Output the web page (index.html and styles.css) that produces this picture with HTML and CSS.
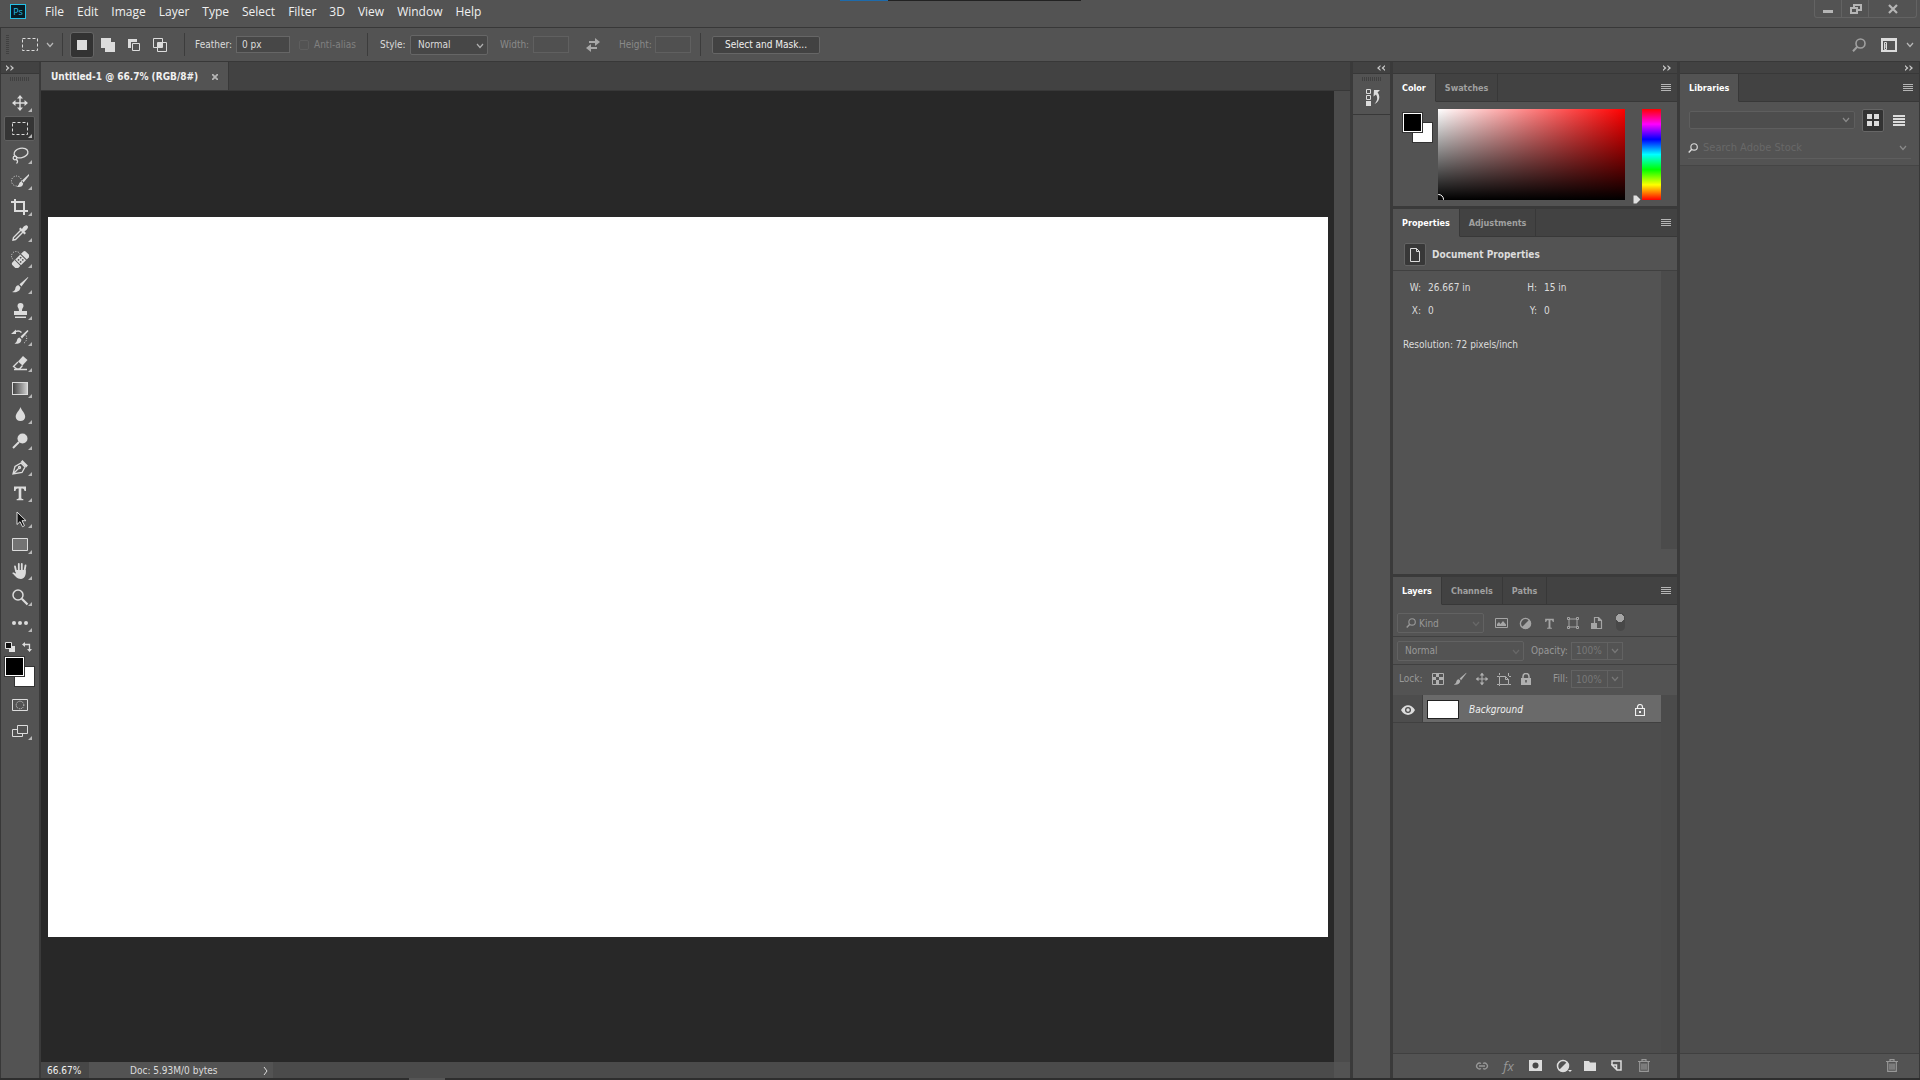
FILE: index.html
```html
<!DOCTYPE html>
<html lang="en">
<head>
<meta charset="UTF-8" />
<meta name="viewport" content="width=device-width, initial-scale=1" />
<title>Untitled-1 @ 66.7% (RGB/8#)</title>
<link rel="stylesheet" href="styles.css">
</head>
<body>

<!-- shared icons -->
<svg class="defs" aria-hidden="true">
  <symbol id="chevron" viewBox="0 0 8 6"><path d="M1 1l3 3.500L7 1" fill="none" stroke="currentColor" stroke-width="1.200"/></symbol>
  <symbol id="collapse" viewBox="0 0 8 6"><path d="M0 0l3.500 3L0 6V4.500L1.500 3 0 1.500zM4.500 0L8 3 4.500 6V4.500L6 3 4.500 1.500z" fill="currentColor"/></symbol>
  <symbol id="panelmenu" viewBox="0 0 10 9"><path d="M0 1.500h10M0 3.500h10M0 5.500h10M0 7.500h10" stroke="currentColor"/></symbol>
  <symbol id="search" viewBox="0 0 14 14"><circle cx="8.500" cy="5.500" r="4.500" fill="none" stroke="currentColor" stroke-width="1.600"/><path d="M5.300 8.800L1 13.300" stroke="currentColor" stroke-width="2"/></symbol>
  <symbol id="brush" viewBox="0 0 18 18"><path d="M17 1L8.500 8.200l1.900 2.300L17.300 1.500zM7.600 9.200c-2.500.1-3 1.700-3.400 3.700-.3 1.300-1.500 2.600-3.200 3.100 3.600.8 8.200-.1 8.400-4.700z" fill="currentColor"/></symbol>
  <symbol id="move" viewBox="0 0 18 18"><path d="M9 2v14M2 9h14" stroke="currentColor" stroke-width="1.400"/><path d="M9 1L6 4.500h6zM9 17l-3-3.500h6zM1 9l3.500-3v6zM17 9l-3.500-3v6z" fill="currentColor"/></symbol>
  <symbol id="type" viewBox="0 0 18 18"><path d="M3 2.500h12V7h-1.500c-.2-1.800-.8-2.600-2-2.600h-1.200v9.300c0 .9.500 1.200 2 1.300v1.200H5.700V15c1.500-.1 2-.4 2-1.300V4.400H6.500c-1.200 0-1.800.8-2 2.600H3z" fill="currentColor"/></symbol>
  <symbol id="trash" viewBox="0 0 12 13"><path d="M0 2.500h12M4 2.500V.7h4v1.800M1.700 3v9.300h8.600V3M4 4.500v6.300M6 4.500v6.300M8 4.500v6.300" fill="none" stroke="currentColor" stroke-width="1.200"/></symbol>
  <symbol id="adjust" viewBox="0 0 14 14"><circle cx="7" cy="7" r="5.500" fill="none" stroke="currentColor" stroke-width="1.500"/><path d="M11 3L3 11A5.500 5.500 0 0 0 11 3z" fill="currentColor"/></symbol>
</svg>

<header class="menubar">
  <span class="ps-logo">Ps</span>
  <nav>
    <button>File</button><button>Edit</button><button>Image</button><button>Layer</button><button>Type</button><button>Select</button><button>Filter</button><button>3D</button><button>View</button><button>Window</button><button>Help</button>
  </nav>
  <div class="window-controls">
    <button aria-label="Minimize"><svg width="10" height="14"><path d="M0 9.500h10" stroke="currentColor" stroke-width="3"/></svg></button>
    <button aria-label="Restore"><svg width="13" height="12" fill="none" stroke="currentColor" stroke-width="2"><path d="M5 5V2h7v5H9"/><path d="M2 5h6v5H2z"/></svg></button>
    <button class="close" aria-label="Close"><svg width="10" height="10"><path d="M1 1l8 8M9 1L1 9" stroke="currentColor" stroke-width="2.200"/></svg></button>
  </div>
  <span class="edge-strip"></span>
</header>

<section class="options">
  <span class="grip-v"></span>
  <button class="tool-preset" aria-label="Tool preset">
    <svg width="16" height="13"><rect x=".5" y=".5" width="15" height="12" fill="none" stroke="currentColor" stroke-dasharray="3 2"/></svg>
    <svg class="chev" width="8" height="6"><use href="#chevron"/></svg>
  </button>
  <span class="sep"></span>
  <div class="modes">
    <button class="on" aria-label="New selection"><svg width="16" height="16"><path d="M3 3h10v10H3z" fill="currentColor"/></svg></button>
    <button aria-label="Add to selection"><svg width="16" height="16"><path d="M1 1h10v4h4v10H5v-4H1z" fill="currentColor"/></svg></button>
    <button aria-label="Subtract from selection"><svg width="16" height="16"><path d="M2 2h9v3H5v6H2z" fill="currentColor"/><path d="M6.500 6.500h7v7h-7z" fill="none" stroke="currentColor"/></svg></button>
    <button aria-label="Intersect with selection"><svg width="16" height="16"><path d="M1.500 1.500h9v9h-9zM5.500 5.500h9v9h-9z" fill="none" stroke="currentColor"/><path d="M6 6h4v4H6z" fill="currentColor"/></svg></button>
  </div>
  <span class="sep"></span>
  <label class="feather" for="feather">Feather:</label>
  <input id="feather" class="field" type="text" value="0 px">
  <label class="anti"><input type="checkbox" disabled>Anti-alias</label>
  <span class="sep"></span>
  <label class="style-label" for="style">Style:</label>
  <span class="select style-select"><select id="style"><option>Normal</option></select><svg width="8" height="6"><use href="#chevron"/></svg></span>
  <label class="dim size-label" for="width">Width:</label>
  <input id="width" class="field small" type="text" disabled>
  <button class="swap" aria-label="Swap width and height"><svg width="14" height="14" fill="currentColor"><path d="M3 3h6V0l5 4-5 4V5H3zM11 9v2H5v3L0 10l5-4v3z"/></svg></button>
  <label class="dim size-label" for="height">Height:</label>
  <input id="height" class="field small" type="text" disabled>
  <span class="sep"></span>
  <button class="mask-btn">Select and Mask...</button>
  <div class="options-right">
    <button class="find" aria-label="Search"><svg width="14" height="14"><use href="#search"/></svg></button>
    <button aria-label="Workspace"><svg width="16" height="14"><path d="M1 1h14v12H1zM1 2h14" fill="none" stroke="currentColor" stroke-width="2"/><path d="M3.500 4.500h2v7h-2zM3.500 7h2M3.500 9h2" fill="none" stroke="currentColor"/></svg>
    <svg class="chev" width="8" height="6"><use href="#chevron"/></svg></button>
  </div>
</section>

<main class="workspace">
  <aside class="toolbar">
    <div class="strip"><svg width="8" height="6"><use href="#collapse"/></svg></div>
    <span class="grip-h"></span>
    <div class="tools">
      <button aria-label="Move"><svg viewBox="0 0 18 18"><use href="#move"/></svg></button>
      <button class="on" aria-label="Rectangular marquee"><svg viewBox="0 0 18 18"><rect x="1.500" y="2.500" width="15" height="12" fill="none" stroke="currentColor" stroke-dasharray="3 2"/></svg></button>
      <button aria-label="Lasso"><svg viewBox="0 0 18 18" fill="none" stroke="currentColor" stroke-width="1.300"><ellipse cx="10" cy="7" rx="7" ry="4.700" transform="rotate(-12 10 7)"/><circle cx="4" cy="12" r="1.800"/><path d="M5 13.500c2 .5 2 2.500.5 4"/></svg></button>
      <button aria-label="Quick selection"><svg viewBox="0 0 18 18"><circle cx="5.500" cy="9" r="5" fill="none" stroke="currentColor" stroke-dasharray="1 1.500"/><path d="M18 2l-7 6.500 1.500 2L18.500 3zM10.500 9.500c-2 .3-2.300 1.800-2.800 3.200-.4 1-1.200 1.700-2.200 2 3.300.7 6.500.2 6.700-3.200z" fill="currentColor"/></svg></button>
      <button aria-label="Crop"><svg viewBox="0 0 18 18" fill="none" stroke="currentColor" stroke-width="2"><path d="M4 1v12h13M0 4h13v13"/></svg></button>
      <button aria-label="Eyedropper"><svg viewBox="0 0 18 18"><path d="M10 6l-7.500 7.500L2 16l2.500-.5L12 8" fill="none" stroke="currentColor" stroke-width="1.400"/><path d="M8 5l1.500-1.500L11 5c1-1.500 3-4.500 5-3.500s1 3.500-2.500 6L15 9l-1.500 1.500z" fill="currentColor"/></svg></button>
      <button aria-label="Healing brush"><svg viewBox="0 0 18 18"><circle cx="5" cy="6" r="4.500" fill="none" stroke="currentColor" stroke-dasharray="1 1.500"/><g transform="rotate(-45 10 9.500)"><rect x="0" y="5.500" width="19" height="8" rx="2" fill="currentColor"/><path d="M5.500 5v9M13.500 5v9" stroke="#535353"/><g fill="#535353"><circle cx="8" cy="8" r=".9"/><circle cx="11" cy="8" r=".9"/><circle cx="8" cy="11" r=".9"/><circle cx="11" cy="11" r=".9"/></g></g></svg></button>
      <button aria-label="Brush"><svg viewBox="0 0 18 18"><use href="#brush"/></svg></button>
      <button aria-label="Clone stamp"><svg viewBox="0 0 18 18" fill="currentColor"><path d="M9.500 1a3 3 0 0 1 3 3c0 1.800-1.500 2-1.500 5h5v4H3V9h5c0-3-1.500-3.200-1.500-5a3 3 0 0 1 3-3zM4 14.500h11V16H4z"/></svg></button>
      <button aria-label="History brush"><svg viewBox="0 0 18 18"><path d="M16.500 2L9.500 8.500l1.500 2L17.500 3zM8.500 9.500c-2 .3-2.200 1.800-2.700 3.500-.3 1.200-1.200 2-2.300 2.500 3.300.6 6.700 0 6.900-4zM0 6l5-4.500V6z" fill="currentColor"/><path d="M3 4.500c3-2 6-1.500 7.500 0" fill="none" stroke="currentColor" stroke-width="1.300"/><path d="M15 7.500c1.500 3 .5 6-2.500 8" fill="none" stroke="currentColor" stroke-dasharray="1 1.500"/></svg></button>
      <button aria-label="Eraser"><svg viewBox="0 0 18 18"><path d="M12 2l4.500 4-5 5.500L7 7.500z" fill="currentColor"/><path d="M7 8l-4.500 4.500L6 15h2.500l3-3.500M3 15.500h13" fill="none" stroke="currentColor" stroke-width="1.300"/></svg></button>
      <button aria-label="Gradient"><span class="gradient-icon"></span></button>
      <button aria-label="Blur"><svg viewBox="0 0 18 18"><path d="M9.500 1c1 3.500 4.700 6 4.700 10a4.800 4.800 0 0 1-9.500 0c0-4 3.800-6.500 4.800-10z" fill="currentColor"/></svg></button>
      <button aria-label="Dodge"><svg viewBox="0 0 18 18"><circle cx="11.500" cy="6.500" r="5" fill="currentColor"/><path d="M8 10l-6 6" stroke="currentColor" stroke-width="2"/></svg></button>
      <button aria-label="Pen"><svg viewBox="0 0 18 18" fill="none" stroke="currentColor" stroke-width="1.300"><path d="M2 16L4 8.500 10 5l4 4-3 5.500zM2 16l5.500-5.500"/><circle cx="8.500" cy="9.500" r="1"/><path d="M10.500 3L16 8.500" stroke-width="2.500"/></svg></button>
      <button aria-label="Type"><svg viewBox="0 0 18 18"><use href="#type"/></svg></button>
      <button aria-label="Path selection"><svg viewBox="0 0 18 18"><path d="M6 2v12.500l3-2.800 2.500 5 2-1-2.500-5h4z" fill="#111" stroke="currentColor"/></svg></button>
      <button aria-label="Rectangle"><svg viewBox="0 0 18 18"><path d="M1.500 2.500h15v12h-15z" fill="#737373" stroke="currentColor"/></svg></button>
      <button aria-label="Hand"><svg viewBox="0 0 18 18"><path d="M5 9L4 4.500M7.800 8V2M10.800 8V2M13.500 9l1-5.500" stroke="currentColor" stroke-width="1.800" stroke-linecap="round"/><path d="M4.200 8h10.500c1 5-1.700 9-4.700 9-4 0-5.500-3-9-6 1.500-1.200 2.500-.2 4 .8z" fill="currentColor"/></svg></button>
      <button aria-label="Zoom"><svg viewBox="0 0 18 18"><circle cx="7" cy="7" r="5" fill="none" stroke="currentColor" stroke-width="1.500"/><path d="M10.800 10.800L16.500 16.500" stroke="currentColor" stroke-width="2.200"/></svg></button>
      <button aria-label="More tools"><svg viewBox="0 0 18 18" fill="currentColor"><circle cx="3" cy="9" r="2"/><circle cx="9" cy="9" r="2"/><circle cx="15" cy="9" r="2"/></svg></button>
    </div>
    <div class="swatch-tools">
      <button aria-label="Default colors"><svg width="10" height="10"><path d="M4 4h6v6H4z" fill="#e0e0e0"/><path d="M.5.500h6v6h-6z" fill="#111" stroke="#e0e0e0"/></svg></button>
      <button aria-label="Switch colors"><svg width="10" height="10"><path d="M2 2.500h5.500V8" fill="none" stroke="currentColor" stroke-width="1.300"/><path d="M0 2.500L3 0v5zM7.500 10L5 7h5z" fill="currentColor"/></svg></button>
    </div>
    <div class="swatches"><span class="bg"></span><span class="fg"></span></div>
    <div class="screen-tools">
      <button class="plain" aria-label="Quick mask"><svg width="18" height="14"><path d="M1.500 1.500h15v11h-15z" fill="none" stroke="currentColor"/><circle cx="9" cy="7" r="3.800" fill="none" stroke="currentColor" stroke-dasharray="1 1"/></svg></button>
      <button aria-label="Screen mode"><svg width="18" height="14"><path d="M1.500 5.500h10v7h-10z" fill="none" stroke="currentColor"/><path d="M6.500 1.500h10v8h-10z" fill="#535353" stroke="currentColor"/></svg></button>
    </div>
  </aside>

  <section class="document">
    <div class="doc-tabs"><div class="doc-tab">Untitled-1 @ 66.7% (RGB/8#)<button aria-label="Close document"><svg width="6" height="6"><path d="M0 0l6 6M6 0L0 6" stroke="currentColor" stroke-width="1.800"/></svg></button></div></div>
    <div class="canvas-row">
      <div class="pasteboard"><div class="canvas"></div></div>
      <div class="scroll-v"></div>
    </div>
    <div class="status">
      <input class="zoom" type="text" value="66.67%" aria-label="Zoom level">
      <div class="doc-info"><span>Doc: 5.93M/0 bytes</span><svg width="5" height="10"><path d="M1 1l3 4-3 4" fill="none" stroke="currentColor"/></svg></div>
      <div class="scroll-h"></div>
      <div class="corner"></div>
    </div>
  </section>

  <aside class="dock icons-dock">
    <div class="strip end"><svg class="flip" width="8" height="6"><use href="#collapse"/></svg></div>
    <div class="history">
      <span class="grip-h"></span>
      <button aria-label="History"><svg width="14" height="17"><path d="M.5.500h4v4h-4zM.5 6.500h4v4h-4z" fill="none" stroke="currentColor"/><path d="M0 12h5v5H0z" fill="currentColor"/><path d="M8 1h6l-2.500 2.500C14.500 7 14 12 8.500 15c3-3.500 3.500-6.500 1.500-9.500L7.500 7.500z" fill="currentColor"/></svg></button>
    </div>
  </aside>

  <aside class="dock panels-dock">
    <div class="strip end"><svg width="8" height="6"><use href="#collapse"/></svg></div>

    <section class="panel">
      <div class="tabs"><button class="active">Color</button><button>Swatches</button><button class="menu" aria-label="Panel menu"><svg width="10" height="9"><use href="#panelmenu"/></svg></button></div>
      <div class="color-body">
        <div class="swatches"><span class="bg"></span><span class="fg"></span></div>
        <div class="spectrum"><span class="picker"></span></div>
        <div class="hue"><svg width="8" height="9"><path d="M.5.500h3l4 4-4 4h-3z" fill="#e0e0e0"/></svg></div>
      </div>
    </section>

    <section class="panel properties">
      <div class="tabs"><button class="active">Properties</button><button>Adjustments</button><button class="menu" aria-label="Panel menu"><svg width="10" height="9"><use href="#panelmenu"/></svg></button></div>
      <div class="prop-head">
        <span class="doc-icon"><svg width="12" height="14"><path d="M1.500.500h6l3 3v10h-9zM7.500.500v3h3" fill="none" stroke="currentColor"/></svg></span>
        Document Properties
      </div>
      <div class="prop-body">
        <div class="prop-content">
          <dl>
            <dt>W:</dt><dd>26.667 in</dd><dt>H:</dt><dd>15 in</dd>
            <dt>X:</dt><dd>0</dd><dt>Y:</dt><dd>0</dd>
          </dl>
          <p>Resolution: 72 pixels/inch</p>
        </div>
        <div class="panel-scroll"></div>
      </div>
    </section>

    <section class="panel layers">
      <div class="tabs"><button class="active">Layers</button><button>Channels</button><button>Paths</button><button class="menu" aria-label="Panel menu"><svg width="10" height="9"><use href="#panelmenu"/></svg></button></div>
      <div class="filter-row">
        <span class="select kind"><svg class="lens" width="10" height="10"><use href="#search"/></svg><select aria-label="Filter kind" disabled><option>Kind</option></select><svg width="8" height="6"><use href="#chevron"/></svg></span>
        <div class="filters">
          <button aria-label="Pixel layers"><svg width="13" height="12"><path d="M.5 1.500h12v9H.5z" fill="none" stroke="currentColor"/><path d="M2 9V7l2-2 1.500 2L8 4l3 3.500V9z" fill="currentColor"/></svg></button>
          <button aria-label="Adjustment layers"><svg width="13" height="13"><use href="#adjust"/></svg></button>
          <button aria-label="Type layers"><svg width="13" height="13"><use href="#type"/></svg></button>
          <button aria-label="Shape layers"><svg width="12" height="12" fill="none" stroke="currentColor"><path d="M2 2h8v8H2z"/><path fill="#535353" d="M.5.500h2v2h-2zM9.500.500h2v2h-2zM.5 9.500h2v2h-2zM9.500 9.500h2v2h-2z"/></svg></button>
          <button aria-label="Smart objects"><svg width="12" height="13"><path d="M3.500 7V.500h4l3 3v8H6M7.500.500v3h3" fill="none" stroke="currentColor" stroke-width="1.200"/><path d="M0 6h6v6H0z" fill="currentColor"/></svg></button>
        </div>
        <span class="toggle"></span>
      </div>
      <div class="blend-row">
        <span class="select blend"><select aria-label="Blend mode" disabled><option>Normal</option></select><svg width="8" height="6"><use href="#chevron"/></svg></span>
        <label for="opacity">Opacity:</label>
        <span class="percent"><input id="opacity" type="text" value="100%" disabled><button aria-label="Opacity slider" disabled><svg width="8" height="6"><use href="#chevron"/></svg></button></span>
      </div>
      <div class="lock-row">
        <span class="lock-label">Lock:</span>
        <div class="locks">
          <button aria-label="Lock transparent pixels"><svg width="12" height="12"><path d="M.5.500h11v11H.5z" fill="none" stroke="currentColor"/><path d="M4 1h3v3H4zM1 4h3v3H1zM7 4h4v3H7zM4 7h3v4H4z" fill="currentColor"/></svg></button>
          <button aria-label="Lock image pixels"><svg width="14" height="14"><use href="#brush"/></svg></button>
          <button aria-label="Lock position"><svg width="14" height="14"><use href="#move"/></svg></button>
          <button aria-label="Lock artboard"><svg width="14" height="13" fill="none" stroke="currentColor"><path d="M2.500 3.500h6l3 3v5h-9zM8.500 3.500v3h3M2.500 0v2M0 3.500h2M11.500 0v3M12 3.500h2M2.500 12v1M0 11.500h2M12 11.500h2"/></svg></button>
          <button aria-label="Lock all"><svg width="10" height="12"><path d="M0 5h10v7H0z" fill="currentColor"/><path d="M2 5V3.500a3 3 0 0 1 6 0V5" fill="none" stroke="currentColor" stroke-width="1.500"/><path d="M5 7v2.500" stroke="#535353" stroke-width="1.500"/></svg></button>
        </div>
        <label for="fill">Fill:</label>
        <span class="percent"><input id="fill" type="text" value="100%" disabled><button aria-label="Fill slider" disabled><svg width="8" height="6"><use href="#chevron"/></svg></button></span>
      </div>
      <div class="layer-list">
        <div class="layer">
          <button class="eye" aria-label="Toggle visibility"><svg width="14" height="10"><path d="M0 5c3.500-6.500 10.500-6.500 14 0-3.500 6.500-10.500 6.500-14 0z" fill="currentColor"/><circle cx="7" cy="5" r="3" fill="#4d4d4d"/><circle cx="7" cy="5" r="1.700" fill="currentColor"/></svg></button>
          <div class="layer-main">
            <span class="thumb"></span><em>Background</em>
            <svg width="10" height="12"><path d="M.5 4.500h9v7h-9zM2.500 4.500V3a2.500 2.500 0 0 1 5 0v1.500" fill="none" stroke="currentColor" stroke-width="1.200"/><path d="M4 7h2v2H4z" fill="currentColor"/></svg>
          </div>
        </div>
        <div class="panel-scroll"></div>
      </div>
      <div class="panel-foot">
        <button class="off" aria-label="Link layers"><svg width="14" height="8" fill="none" stroke="currentColor" stroke-width="1.400"><path d="M6 1.500A2.900 2.900 0 1 0 6 6.500M8 1.500a2.900 2.900 0 1 1 0 5M4 4h6"/></svg></button>
        <button class="off fx" aria-label="Layer style">fx</button>
        <button aria-label="Add mask"><svg width="13" height="11"><path d="M0 0h13v11H0z" fill="currentColor"/><circle cx="6.500" cy="5.500" r="3" fill="#484848"/></svg></button>
        <button aria-label="New adjustment layer"><svg width="14" height="14"><use href="#adjust"/></svg><i></i></button>
        <button aria-label="New group"><svg width="12" height="10"><path d="M0 0h5l1 1.500h6V10H0z" fill="currentColor"/></svg></button>
        <button aria-label="New layer"><svg width="11" height="11"><path d="M1 5V1h9v9H6M1 5h4.500v4.500z" fill="none" stroke="currentColor" stroke-width="1.500"/></svg></button>
        <button class="off" aria-label="Delete layer"><svg width="12" height="13"><use href="#trash"/></svg></button>
      </div>
    </section>
  </aside>

  <aside class="dock libraries-dock">
    <div class="strip end"><svg width="8" height="6"><use href="#collapse"/></svg></div>
    <section class="panel libraries">
      <div class="tabs"><button class="active">Libraries</button><button class="menu" aria-label="Panel menu"><svg width="10" height="9"><use href="#panelmenu"/></svg></button></div>
      <div class="lib-top">
        <span class="select lib-select"><select aria-label="Library" disabled></select><svg width="8" height="6"><use href="#chevron"/></svg></span>
        <button class="view on" aria-label="Grid view"><svg width="12" height="12"><path d="M0 0h5v5H0zM7 0h5v5H7zM0 7h5v5H0zM7 7h5v5H7z" fill="currentColor"/></svg></button>
        <button class="view" aria-label="List view"><svg width="12" height="11"><path d="M0 1h12M0 4h12M0 7h12M0 10h12" stroke="currentColor" stroke-width="2"/></svg></button>
      </div>
      <div class="lib-search">
        <svg width="10" height="10"><use href="#search"/></svg>
        <input type="text" placeholder="Search Adobe Stock" aria-label="Search Adobe Stock">
        <svg class="chev" width="8" height="6"><use href="#chevron"/></svg>
      </div>
      <div class="lib-body"></div>
      <div class="panel-foot"><button class="off" aria-label="Delete"><svg width="12" height="13"><use href="#trash"/></svg></button></div>
    </section>
  </aside>
</main>
<footer class="bottom-edge"></footer>
</body>
</html>
```
FILE: styles.css
```css
* {
  box-sizing: border-box;
}
body {
  margin: 0;
  height: 100vh;
  display: flex;
  flex-direction: column;
  overflow: hidden;
  background: #535353;
  color: #dcdcdc;
  font-family: "DejaVu Sans Condensed", "DejaVu Sans", Tahoma, sans-serif;
  font-stretch: condensed;
  font-size: 10px;
  line-height: 12px;
}
.defs {
  display: none;
}
svg {
  display: block;
  flex: none;
}
button, input, select {
  font: inherit;
  color: inherit;
  background: none;
  border: 0;
  margin: 0;
  padding: 0;
  border-radius: 0;
  outline: none;
}
button {
  display: flex;
  align-items: center;
  justify-content: center;
}
label {
  white-space: nowrap;
}
select {
  appearance: none;
  width: 100%;
  height: 100%;
  opacity: 1;
}

/* menu bar */
.menubar {
  position: relative;
  display: flex;
  align-items: flex-start;
  height: 28px;
  flex: none;
  border-bottom: 1px solid #383838;
}
.ps-logo {
  width: 16px;
  height: 15px;
  margin: 4px 13px 0 10px;
  border: 1px solid #26c0e6;
  background: #061c26;
  color: #26c0e6;
  font: 9px/13px "Open Sans", sans-serif;
  text-align: center;
}
.menubar nav {
  display: flex;
  font: 12px/24px "Open Sans", "Segoe UI", sans-serif;
  color: #f0f0f0;
}
.menubar nav button {
  padding: 0 7px 0 6px;
}
.window-controls {
  display: flex;
  margin: 0 3px 0 auto;
  border: 1px solid #636363;
  border-top: 0;
  border-radius: 0 0 3px 3px;
  color: #b5b5b5;
}
.window-controls button {
  width: 27px;
  height: 17px;
  border-right: 1px solid #636363;
}
.window-controls .close {
  width: 47px;
  border-right: 0;
}
.edge-strip {
  position: absolute;
  top: 0;
  left: 43.75%;
  width: 241px;
  height: 1px;
  background: linear-gradient(90deg, #1e6bab 48px, #222 48px);
}

/* options bar */
.options {
  display: flex;
  align-items: center;
  height: 34px;
  flex: none;
  padding-left: 5px;
  border-bottom: 1px solid #383838;
  border-left: 1px solid #383838;
}
.grip-v {
  width: 3px;
  height: 19px;
  margin-right: 13px;
  background: repeating-linear-gradient(#404040 0 1px, #535353 1px 2px);
}
.tool-preset svg + svg {
  margin-left: 8px;
}
.chev {
  color: #b8b8b8;
}
.sep {
  width: 1px;
  height: 23px;
  flex: none;
  background: #3c3c3c;
}
.tool-preset + .sep {
  margin-left: 8px;
}
.modes {
  display: flex;
  gap: 2px;
  margin: 0 12px 0 7px;
}
.modes button {
  width: 24px;
  height: 26px;
  border-radius: 3px;
}
.modes .on {
  background: #333;
  border: 1px solid #666;
}
.feather {
  width: 38px;
  margin: 0 3px 0 10px;
}
.field {
  width: 54px;
  height: 17px;
  padding: 0 5px;
  background: #474747;
  border: 1px solid #666;
}
.small {
  width: 36px;
  background: #505050;
  border-color: #606060;
}
.anti {
  display: flex;
  align-items: center;
  width: 68px;
  margin-left: 9px;
  color: #808080;
}
.anti input {
  appearance: none;
  width: 10px;
  height: 10px;
  margin-right: 5px;
  border: 1px solid #5e5e5e;
  border-radius: 2px;
}
.style-label {
  width: 26px;
  margin: 0 4px 0 12px;
}
.select {
  position: relative;
  display: block;
  height: 20px;
  border: 1px solid #666;
  border-radius: 2px;
  background: #474747;
}
.select select {
  display: block;
  padding: 1px 0 0 7px;
}
.select svg {
  position: absolute;
  right: 3px;
  top: 7px;
  color: #b0b0b0;
}
.style-select {
  width: 78px;
}
.dim {
  color: #8a8a8a;
}
.size-label {
  width: 33px;
}
.style-select + .size-label {
  margin-left: 12px;
}
.swap {
  margin: 0 19px 0 17px;
  color: #a8a8a8;
}
.swap + .size-label {
  width: 36px;
}
.small + .sep {
  margin: 0 11px 0 9px;
}
.mask-btn {
  width: 108px;
  height: 18px;
  color: #f0f0f0;
  background: #424242;
  border: 1px solid #666;
  border-radius: 2px;
}
.options-right {
  display: flex;
  margin: 0 6px 0 auto;
}
.options-right button {
  gap: 9px;
}
.options-right .find {
  margin-right: 15px;
  color: #a0a0a0;
}

/* workspace */
.workspace {
  flex: 1;
  min-height: 0;
  display: flex;
}
.strip {
  display: flex;
  align-items: center;
  height: 12px;
  flex: none;
  padding: 0 6px;
  background: #424242;
  border-bottom: 1px solid #383838;
  color: #c8c8c8;
}
.end {
  justify-content: flex-end;
}
.flip {
  transform: scaleX(-1);
}
.grip-h {
  display: block;
  width: 20px;
  height: 4px;
  background: repeating-linear-gradient(90deg, #404040 0 1px, #535353 1px 2px);
}
.toolbar {
  width: 41px;
  flex: none;
  border-left: 1px solid #383838;
  border-right: 2px solid #3a3a3a;
}
.toolbar .strip {
  padding-left: 5px;
}
.toolbar .grip-h {
  margin: 3px auto 9px 9px;
}
.tools button, .screen-tools button {
  position: relative;
  width: 31px;
  height: 25px;
  margin: 0 0 1px 3px;
  border: 1px solid transparent;
  border-radius: 2px;
}
.tools svg {
  width: 18px;
  height: 18px;
}
.tools .on {
  background: #353535;
  border-color: #606060;
}
.tools button::after, .screen-tools button::after {
  content: "";
  position: absolute;
  right: 2px;
  bottom: 2px;
  border: 2px solid transparent;
  border-right-color: #b8b8b8;
  border-bottom-color: #b8b8b8;
}
.screen-tools .plain::after {
  display: none;
}
.gradient-icon {
  width: 16px;
  height: 13px;
  border: 1px solid #dcdcdc;
  background: linear-gradient(90deg, #444, #ccc);
}
.swatch-tools {
  display: flex;
  gap: 7px;
  padding: 6px 0 5px 4px;
}
.swatches {
  position: relative;
  width: 29px;
  height: 29px;
}
.swatches span {
  position: absolute;
  width: 19px;
  height: 19px;
  background: #000;
  border: 1px solid #fff;
  outline: 1px solid #333;
}
.swatches .bg {
  right: 0;
  bottom: 0;
  background: #fff;
}
.swatches .fg {
  left: 0;
  top: 0;
}
.toolbar .swatches {
  margin: 0 0 6px 4px;
}

/* document */
.document {
  flex: 1;
  min-width: 0;
  display: flex;
  flex-direction: column;
}
.doc-tabs {
  display: flex;
  height: 29px;
  flex: none;
  background: #424242;
  border-bottom: 1px solid #383838;
}
.doc-tab {
  display: flex;
  align-items: center;
  justify-content: space-between;
  width: 188px;
  padding: 2px 10px 0;
  background: #535353;
  border-right: 1px solid #383838;
  color: #f0f0f0;
  font-weight: bold;
}
.doc-tab button {
  color: #b5b5b5;
}
.canvas-row {
  flex: 1;
  display: flex;
  min-height: 0;
}
.pasteboard {
  flex: 1;
  display: flex;
  align-items: center;
  padding: 0 6px 0 7px;
  background: #282828;
}
.canvas {
  flex: 1;
  aspect-ratio: 16 / 9;
  background: #fff;
}
.scroll-v {
  width: 16px;
  background: #4b4b4b;
}
.status {
  display: flex;
  height: 16px;
  flex: none;
  background: #4b4b4b;
}
.zoom {
  width: 48px;
  padding: 1px 0 0 6px;
  background: #474747;
  color: #f0f0f0;
}
.doc-info {
  display: flex;
  align-items: center;
  justify-content: space-between;
  width: 184px;
  padding: 1px 5px 0 41px;
  background: #535353;
}
.scroll-h {
  flex: 1;
}
.corner {
  width: 16px;
  background: #535353;
}

/* docks */
.dock {
  display: flex;
  flex-direction: column;
  flex: none;
  border-left: 3px solid #3a3a3a;
}
.icons-dock {
  width: 40px;
}
.icons-dock .strip {
  padding-right: 5px;
}
.history {
  height: 41px;
  padding: 3px 0 0 9px;
  border-bottom: 1px solid #383838;
}
.history button {
  margin: 8px 0 0 4px;
}
.panels-dock {
  width: 287px;
}
.libraries-dock {
  width: 243px;
  border-right: 1px solid #383838;
}
.panel {
  border-bottom: 3px solid #3a3a3a;
}
.tabs {
  display: flex;
  height: 28px;
  background: #424242;
  font-size: 9px;
  font-weight: bold;
  color: #a0a0a0;
}
.tabs button {
  padding: 0 9px;
  border-right: 1px solid #383838;
  border-bottom: 1px solid #383838;
}
.tabs .active {
  color: #fff;
  background: #535353;
  border-bottom-color: #535353;
}
.tabs .menu {
  flex: 1;
  justify-content: flex-end;
  padding-right: 6px;
  border-right: 0;
  color: #b5b5b5;
}
.color-body {
  display: flex;
  align-items: flex-start;
  height: 104px;
  padding: 7px 16px 0 9px;
}
.color-body .swatches {
  margin: 4px 6px 0 1px;
}
.spectrum {
  position: relative;
  flex: 1;
  height: 91px;
  overflow: hidden;
  background: linear-gradient(transparent, #000), linear-gradient(90deg, #fff, #f00);
}
.picker {
  position: absolute;
  left: -5px;
  bottom: -5px;
  width: 11px;
  height: 11px;
  border: 1px solid #fff;
  border-radius: 50%;
}
.hue {
  position: relative;
  width: 19px;
  height: 91px;
  margin-left: 17px;
  background: linear-gradient(#f00, #f0f, #00f, #0ff, #0f0, #ff0, #f00);
}
.hue svg {
  position: absolute;
  left: -9px;
  bottom: -4px;
}
.properties {
  height: 368px;
  display: flex;
  flex-direction: column;
}
.prop-head {
  display: flex;
  align-items: center;
  gap: 6px;
  height: 34px;
  padding: 2px 0 0 11px;
  border-bottom: 1px solid #404040;
  font-weight: bold;
}
.doc-icon {
  display: grid;
  place-items: center;
  width: 22px;
  height: 23px;
  background: #383838;
  border: 1px solid #636363;
  border-radius: 2px;
}
.prop-body {
  flex: 1;
  display: flex;
  padding-bottom: 25px;
}
.prop-content {
  flex: 1;
}
.prop-content dl {
  display: grid;
  grid-template-columns: 28px 91px 25px 1fr;
  row-gap: 11px;
  margin: 11px 0 0;
}
.prop-content dt {
  text-align: right;
}
.prop-content dd {
  margin: 0 0 0 7px;
}
.prop-content p {
  margin: 22px 0 0 10px;
}
.panel-scroll {
  width: 16px;
  background: #4b4b4b;
}
.layers, .libraries {
  flex: 1;
  min-height: 0;
  display: flex;
  flex-direction: column;
  border-bottom: 0;
}
.filter-row, .blend-row, .lock-row {
  display: flex;
  align-items: center;
  padding-left: 4px;
  color: #989898;
}
.filter-row {
  height: 32px;
  padding-top: 5px;
  border-bottom: 1px solid #404040;
}
.blend-row {
  height: 28px;
  border-bottom: 1px solid #404040;
}
.lock-row {
  height: 30px;
  padding-bottom: 2px;
}
.layers .select {
  background: none;
  border-color: #626262;
}
.layers .select svg {
  color: #686868;
}
.layers .select .lens {
  left: 8px;
  top: 4px;
  color: #989898;
}
.kind {
  width: 87px;
}
.kind select {
  padding-left: 21px;
}
.blend {
  width: 127px;
}
.filters {
  display: grid;
  grid-template-columns: repeat(5, 24px);
  margin-left: 5px;
  color: #a5a5a5;
}
.toggle {
  width: 9px;
  height: 18px;
  margin: -2px 0 0 7px;
  border-radius: 5px;
  background: radial-gradient(circle at 4px 5px, #a5a5a5 4px, #484848 4px);
}
.blend-row label {
  width: 40px;
  margin-left: 7px;
}
.percent {
  display: flex;
  width: 52px;
  height: 18px;
  border: 1px solid #626262;
  color: #787878;
}
.percent input {
  width: 35px;
  padding: 1px 0 0 4px;
}
.percent button {
  flex: 1;
  border-left: 1px solid #626262;
}
.lock-label {
  width: 30px;
  padding-left: 2px;
}
.locks {
  display: grid;
  grid-template-columns: repeat(5, 22px);
  color: #b0b0b0;
}
.lock-row label {
  width: 18px;
  margin-left: 16px;
}
.layer-list {
  flex: 1;
  display: flex;
  background: #4d4d4d;
}
.layer {
  flex: 1;
  display: flex;
  height: 28px;
  border-bottom: 1px solid #404040;
}
.eye {
  width: 30px;
  padding-top: 2px;
  border-right: 1px solid #404040;
}
.layer-main {
  flex: 1;
  display: flex;
  align-items: center;
  padding: 2px 16px 0 4px;
  background: #6a6a6a;
  color: #f0f0f0;
}
.layer-main svg {
  margin-left: auto;
}
.thumb {
  width: 32px;
  height: 19px;
  margin-right: 10px;
  background: #fff;
  border: 1px solid #222;
}
.panel-foot {
  display: flex;
  justify-content: flex-end;
  height: 25px;
  flex: none;
  padding: 0 20px 1px 0;
  border-top: 1px solid #404040;
}
.panel-foot button {
  position: relative;
  width: 27px;
}
.panel-foot .off {
  color: #989898;
}
.panel-foot .fx {
  font: italic 13px/16px "Open Sans", sans-serif;
}
.panel-foot i {
  position: absolute;
  right: 4px;
  bottom: 3px;
  border: 2px solid transparent;
  border-top-color: #e0e0e0;
}

/* libraries */
.lib-top {
  display: flex;
  align-items: center;
  height: 36px;
  padding: 0 9px;
}
.lib-select {
  flex: 1;
  height: 18px;
  margin-right: 7px;
  background: #4d4d4d;
  border-color: #5e5e5e;
}
.lib-select svg {
  top: 5px;
  right: 4px;
  color: #8a8a8a;
}
.view {
  width: 22px;
  height: 23px;
  border-radius: 2px;
}
.view + .view {
  margin-left: 4px;
}
.view.on {
  background: #333;
  border: 1px solid #666;
}
.lib-search {
  display: flex;
  align-items: center;
  height: 21px;
  margin: 0 8px 6px;
  border-bottom: 1px solid #5e5e5e;
}
.lib-search input {
  flex: 1;
  min-width: 0;
  margin-left: 5px;
  font-size: 11px;
}
.lib-search input::placeholder {
  color: #686868;
  opacity: 1;
}
.lib-search .chev {
  margin-right: 4px;
  color: #8a8a8a;
}
.lib-body {
  flex: 1;
  background: #4d4d4d;
  border-top: 1px solid #454545;
}
.libraries .panel-foot {
  padding-right: 14px;
}

.bottom-edge {
  height: 2px;
  flex: none;
  background: linear-gradient(90deg, transparent 409px, #555 409px 445px, transparent 445px), #2e2e2e;
}
```
